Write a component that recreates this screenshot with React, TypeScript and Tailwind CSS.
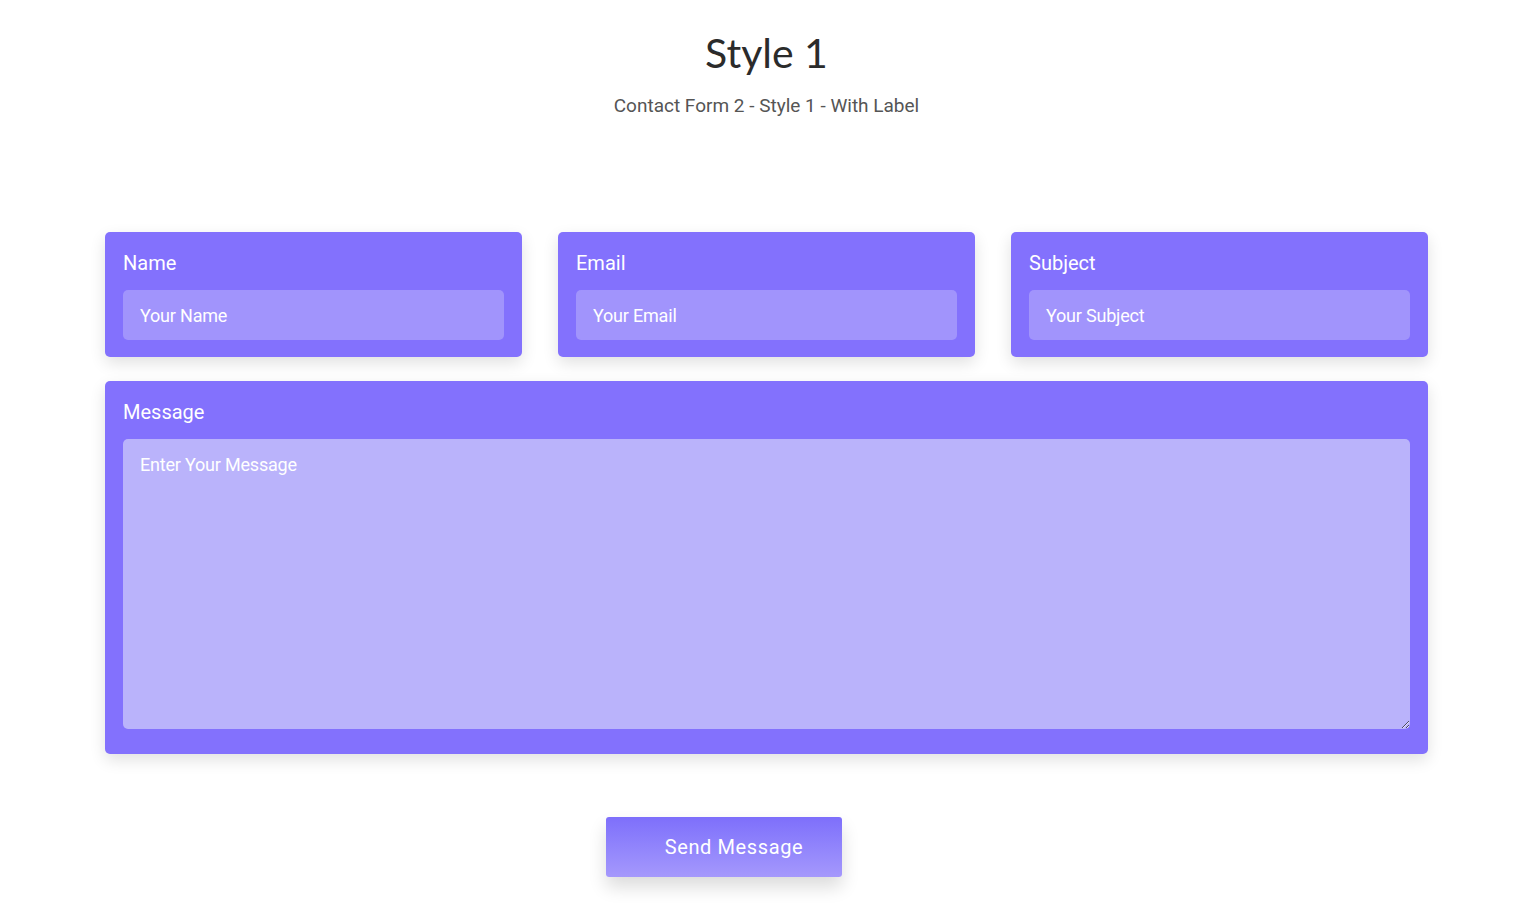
import React from "react";

const roboto = { fontFamily: "Roboto, 'Liberation Sans', sans-serif" };

function Field({ label, placeholder }: { label: string; placeholder: string }) {
  return (
    <div className="flex h-[125px] flex-col rounded-[5px] bg-[#8371fd] px-[18px] pt-[20px] shadow-[0_6px_16px_rgba(0,0,0,0.12)]">
      <label className="text-[20px] font-normal leading-[22px] text-white">{label}</label>
      <input
        placeholder={placeholder}
        className="mt-[16px] h-[50px] w-full rounded-[5px] bg-[#a194fc] px-[17px] text-[18px] tracking-[-0.2px] text-white outline-none placeholder:text-white"
        style={roboto}
      />
    </div>
  );
}

export default function App() {
  return (
    <div className="min-h-[904px] w-full bg-white" style={roboto}>
      <div className="ml-[105px] w-[1323px]">
        <div className="flex flex-col items-center pt-[26px]">
          <h1
            className="text-[41px] leading-[54px] text-[#2b2b2b]"
            style={{ fontFamily: "Lato, 'Open Sans', sans-serif", fontWeight: 400 }}
          >
            Style 1
          </h1>
          <p className="mt-[14px] text-[19px] font-normal leading-[24px] text-[#555555]">
            Contact Form 2 - Style 1 - With Label
          </p>
        </div>

        <div className="mt-[114px] grid grid-cols-3 gap-[36px]">
          <Field label="Name" placeholder="Your Name" />
          <Field label="Email" placeholder="Your Email" />
          <Field label="Subject" placeholder="Your Subject" />
        </div>

        <div className="mt-[24px] flex flex-col rounded-[5px] bg-[#8371fd] px-[18px] pt-[20px] pb-[25px] shadow-[0_6px_16px_rgba(0,0,0,0.12)]">
          <label className="text-[20px] font-normal leading-[22px] text-white">Message</label>
          <textarea
            placeholder="Enter Your Message"
            className="mt-[16px] h-[290px] w-full rounded-[5px] bg-[#bab3fb] px-[17px] py-[12px] text-[18px] tracking-[-0.2px] text-white outline-none placeholder:text-white"
            style={roboto}
          />
        </div>

        <div className="mt-[63px] pl-[501px]">
          <button
            className="h-[60px] w-[236px] rounded-[3px] bg-gradient-to-b from-[#7e6ffb] to-[#a598fc] pl-[20px] text-[20px] font-normal tracking-[0.6px] text-white shadow-[0_10px_18px_rgba(0,0,0,0.14)]"
            style={roboto}
          >
            Send Message
          </button>
        </div>
      </div>
    </div>
  );
}
